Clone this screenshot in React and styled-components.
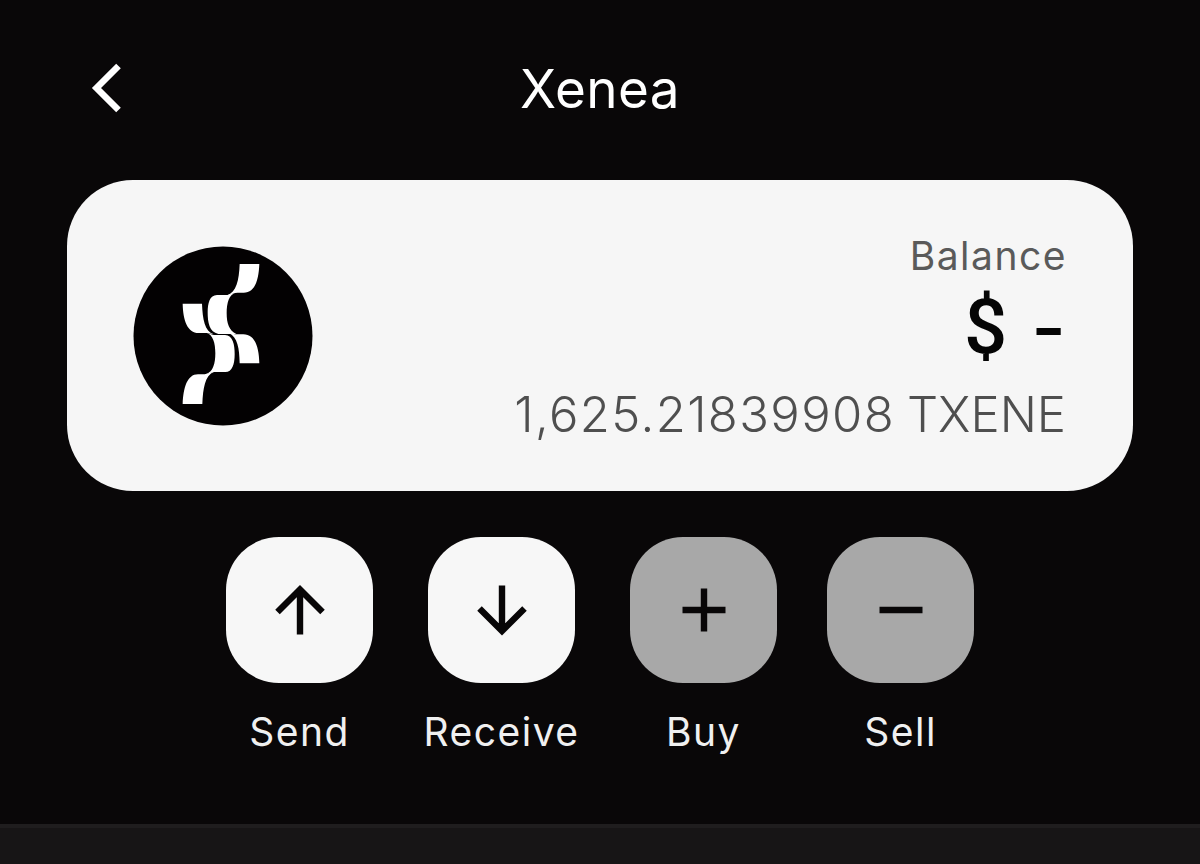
import React from 'react'
import styled, { createGlobalStyle } from 'styled-components'

const GlobalStyle = createGlobalStyle`
  * {
    box-sizing: border-box;
  }

  body {
    margin: 0;
    background: #090708;
    font-family: Inter, 'Liberation Sans', sans-serif;
  }
`

const Screen = styled.main`
  display: flex;
  flex-direction: column;
  width: 1200px;
  height: 864px;
  overflow: hidden;

  background: #090708;
`

const Header = styled.header`
  display: grid;
  grid-template-columns: 60px 1fr 60px;
  align-items: center;

  height: 180px;
  padding: 0 77px 4px;
`

const BackButton = styled.button`
  display: flex;
  justify-content: center;

  padding: 0;
  border: none;
  background: none;
  color: #fff;
  cursor: pointer;
`

const Title = styled.h1`
  margin: 0;
  padding-top: 2px;

  color: #fff;
  font-size: 53px;
  font-weight: 400;
  line-height: 64px;
  letter-spacing: 0.4px;
  text-align: center;
`

const BalanceCard = styled.section`
  display: flex;
  justify-content: space-between;

  width: 1066px;
  height: 311px;
  margin: 0 67px;
  padding: 52px 67px 0 66px;

  border-radius: 66px;
  background: #f6f6f6;
`

const TokenLogo = styled.svg`
  width: 180px;
  height: 180px;
  margin-top: 14px;
`

const BalanceInfo = styled.div`
  display: flex;
  flex-direction: column;
  align-items: flex-end;
`

const BalanceLabel = styled.span`
  margin-right: -1px;

  color: #5a5a5a;
  font-size: 39px;
  font-weight: 400;
  line-height: 48px;
  letter-spacing: 1.5px;
`

const FiatValue = styled.strong`
  display: flex;
  gap: 24px;
  height: 90px;

  color: #050505;
  font-size: 75px;
  font-weight: 500;
  line-height: 90px;
`

const Currency = styled.span`
  padding-top: 2px;
  font-family: Roboto, sans-serif;
  font-size: 76px;
`

const EmptyValue = styled.span`
  padding-top: 6px;
  line-height: 83px;
`

const TokenAmount = styled.span`
  color: #4f4f4f;
  font-size: 49px;
  font-weight: 320;
  line-height: 60px;
  margin-top: 15px;
`

const AmountDigits = styled.span`
  letter-spacing: 1.4px;
`

const TokenSymbol = styled.span`
  margin-left: -2px;
`

const Actions = styled.nav`
  display: grid;
  grid-template-columns: 147px 157px 147px 147px;
  justify-content: center;
  gap: 50px;

  margin-top: 46px;
`

const Action = styled.div`
  display: flex;
  flex-direction: column;
  align-items: center;
`

const ActionButton = styled.button`
  display: flex;
  justify-content: center;
  align-items: center;

  width: 147px;
  height: 146px;
  padding: 0;

  border: none;
  border-radius: 53px;
  background: ${({ disabled }) => (disabled ? '#a8a8a8' : '#f7f7f7')};
  color: #080607;
`

const ActionLabel = styled.span`
  margin-top: 25px;

  color: #f0f0f0;
  font-size: 39px;
  font-weight: 400;
  line-height: 48px;
  letter-spacing: 1.5px;
  white-space: nowrap;
`

const BottomPanel = styled.footer`
  height: 40px;
  margin-top: auto;

  border-top: 4px solid #1f1d1e;
  background: #171516;
`

const icons = {
  up: 'M30 54.5V9.5M7.5 32L30 9.5L52.5 32',
  down: 'M30 5.5V51M7.5 28.5L30 51L52.5 28.5',
  plus: 'M30 8.5V51.5M8.5 30H51.5',
  minus: 'M8.5 30H51.5',
}

const actions = [
  { label: 'Send', icon: 'up' },
  { label: 'Receive', icon: 'down' },
  { label: 'Buy', icon: 'plus', disabled: true },
  { label: 'Sell', icon: 'minus', disabled: true },
]

const ActionIcon = ({ name }) => (
  <svg width="60" height="60" viewBox="0 0 60 60" fill="none">
    <path d={icons[name]} stroke="currentColor" strokeWidth="6.4" />
  </svg>
)

const XeneaLogo = () => (
  <TokenLogo viewBox="40 33 540 540" role="img" aria-label="Xenea">
    <circle cx="310" cy="303" r="268.5" fill="#030102" />
    <g fill="#fff">
      <path d="M360 87H419C417 137 405 173 372 173H354C342 173 335 177 330 182L322 181C350 172 358 137 360 87Z" />
      <path d="M292 180H325L348 174C328 178 321 205 321 234C321 265 328 287 350 297H296C269 291 264 263 264 232C264 205 270 180 292 180Z" />
      <path d="M189 206H247C249 254 255 288 282 298L262 294H237C203 294 190 255 189 206Z" />
      <path d="M260 293L282 300H316C340 300 345 330 345 357C345 388 338 411 317 411H284L260 417C280 411 287 385 287 355C287 324 280 299 260 293Z" />
      <path d="M328 294L346 298H371C405 298 418 335 419 385H360C359 339 354 308 328 294Z" />
      <path d="M235 418H255L282 410C256 422 250 459 248 507H189C191 459 202 418 235 418Z" />
    </g>
  </TokenLogo>
)

const App = () => {
  return (
    <>
      <GlobalStyle />
      <Screen>
        <Header>
          <BackButton aria-label="Back">
            <svg width="60" height="60" viewBox="0 0 60 60" fill="none">
              <path d="M41.5 8L19.5 30L41.5 52" stroke="currentColor" strokeWidth="6.5" />
            </svg>
          </BackButton>
          <Title>Xenea</Title>
        </Header>
        <BalanceCard>
          <XeneaLogo />
          <BalanceInfo>
            <BalanceLabel>Balance</BalanceLabel>
            <FiatValue>
              <Currency>$</Currency>
              <EmptyValue>-</EmptyValue>
            </FiatValue>
            <TokenAmount>
              <AmountDigits>1,625.21839908</AmountDigits> <TokenSymbol>TXENE</TokenSymbol>
            </TokenAmount>
          </BalanceInfo>
        </BalanceCard>
        <Actions>
          {actions.map(({ label, icon, disabled }) => (
            <Action key={label}>
              <ActionButton aria-label={label} disabled={disabled}>
                <ActionIcon name={icon} />
              </ActionButton>
              <ActionLabel>{label}</ActionLabel>
            </Action>
          ))}
        </Actions>
        <BottomPanel />
      </Screen>
    </>
  )
}

export default App
